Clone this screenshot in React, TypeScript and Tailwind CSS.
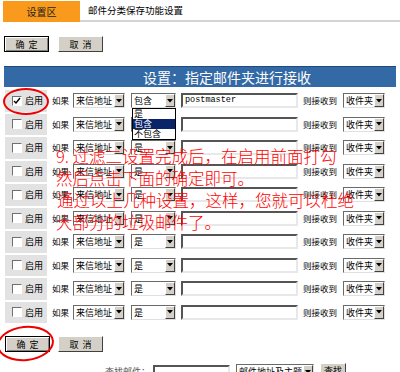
import React from 'react';

const rows = Array.from({ length: 10 }, (_, i) => i);

function Arrow() {
  return (
    <div className="flex h-full w-[10px] shrink-0 items-center justify-center border border-t-white border-l-white border-r-[#404040] border-b-[#404040] bg-[#d4d0c8]">
      <svg width="6" height="4" viewBox="0 0 6 4">
        <path d="M0 0h6L3 3.5z" fill="#000" />
      </svg>
    </div>
  );
}

function Select({ value, width }: { value: string; width: string }) {
  return (
    <div className={`flex h-[15px] ${width} shrink-0 items-stretch border border-t-[#6a6a6a] border-l-[#6a6a6a] border-r-[#e0e0e0] border-b-[#e0e0e0] bg-white`}>
      <div className="flex flex-1 items-center overflow-hidden pl-[2px] leading-none whitespace-nowrap">{value}</div>
      <Arrow />
    </div>
  );
}

function Checkbox({ checked }: { checked: boolean }) {
  return (
    <div className="flex h-[10px] w-[10px] shrink-0 items-center justify-center border border-t-[#707070] border-l-[#707070] border-r-white border-b-white bg-white">
      {checked && (
        <svg width="8" height="8" viewBox="0 0 8 8">
          <path d="M1 4l2 2 4-5" stroke="#000" strokeWidth="1.4" fill="none" />
        </svg>
      )}
    </div>
  );
}

function Btn({ label, primary }: { label: string; primary?: boolean }) {
  return (
    <button
      className={`flex h-[16px] w-[45px] items-center justify-center bg-[#d4d0c8] text-[9px] leading-none tracking-[4px] text-black ${
        primary
          ? 'border border-black shadow-[inset_1px_1px_0_#fff,inset_-1px_-1px_0_#808080]'
          : 'border border-t-white border-l-white border-r-[#404040] border-b-[#404040]'
      }`}
    >
      <span className="pl-[4px]">{label}</span>
    </button>
  );
}

export default function App() {
  return (
    <div className="relative h-[372px] w-[400px] overflow-hidden bg-white font-['Noto_Sans_CJK_SC',sans-serif] text-[9px] text-black">
      {/* tabs */}
      <div className="flex h-[22px] items-stretch pt-[1px] pl-[3px]">
        <div className="flex w-[77px] items-center justify-center bg-[#f99a1c] text-[10px] text-[#222]">设置区</div>
        <div className="flex flex-1 items-center border-b-2 border-[#d4d4d4] pl-[8px] text-[9.5px]">邮件分类保存功能设置</div>
      </div>

      {/* top buttons */}
      <div className="mt-[14px] flex gap-[9px] pl-[4px]">
        <Btn label="确定" primary />
        <Btn label="取消" />
      </div>

      {/* header */}
      <div className="mx-[4px] mt-[14px] flex h-[21px] items-center border-t border-[#1f4a80] bg-[#336aa6] pl-[139px] text-[14px] leading-none text-white">
        设置：指定邮件夹进行接收
      </div>

      {/* rows */}
      <div className="mt-[3px] flex flex-col gap-[2px] pl-[5px]">
        {rows.map((i) => (
          <div key={i} className="flex h-[21.5px] items-center">
            <div className="flex h-full w-[42px] items-center gap-[3px] bg-[#e2e2e2] pl-[7px]">
              <Checkbox checked={i === 0} />
              <span className="whitespace-nowrap">启用</span>
            </div>
            <span className="ml-[5px] w-[16px] shrink-0 text-[8.5px] whitespace-nowrap">如果</span>
            <div className="ml-[5px]">
              <Select value="来信地址" width="w-[52px]" />
            </div>
            <div className="ml-[6px]">
              <Select value={i === 0 ? '包含' : '是'} width="w-[45px]" />
            </div>
            <div className="ml-[5px] flex h-[15px] w-[117px] shrink-0 items-center border-2 border-t-[#555] border-l-[#555] border-r-[#e8e8e8] border-b-[#e8e8e8] bg-white pl-[2px] font-['Liberation_Mono',monospace] text-[8.5px]">
              {i === 0 ? 'postmaster' : ''}
            </div>
            <span className="ml-[5px] w-[35px] shrink-0 text-[8.5px] whitespace-nowrap">则接收到</span>
            <div className="ml-[5px]">
              <Select value="收件夹" width="w-[42px]" />
            </div>
          </div>
        ))}
      </div>

      {/* bottom buttons */}
      <div className="mt-[13px] flex gap-[8px] pl-[5px]">
        <Btn label="确定" primary />
        <Btn label="取消" />
      </div>

      {/* search row, cut off by the window */}
      <div className="mt-[13px] flex items-start pl-[105px]">
        <span className="w-[44px] text-[9px] whitespace-nowrap text-[#555]">查找邮件：</span>
        <div className="ml-[4px] h-[15px] w-[77px] border-2 border-t-[#555] border-l-[#555] border-r-[#e8e8e8] border-b-[#e8e8e8] bg-white" />
        <div className="ml-[6px] -mt-[1px]">
          <Select value="邮件地址及主题" width="w-[78px]" />
        </div>
        <div className="ml-[6px] -mt-[2px]">
          <button className="flex h-[16px] w-[26px] items-center justify-center border border-t-white border-l-white border-r-[#404040] border-b-[#404040] bg-[#d4d0c8] text-[9px]">查找</button>
        </div>
      </div>

      {/* open dropdown list */}
      <div className="absolute left-[132px] top-[108px] w-[44px] border border-black bg-white text-[9px] leading-[10px]">
        <div className="pl-[1px]">是</div>
        <div className="bg-[#0a246a] pl-[1px] text-white">包含</div>
        <div className="pl-[1px]">不包含</div>
      </div>

      {/* red annotations */}
      <div className="absolute left-[56px] top-[145px] font-['Noto_Sans_CJK_SC',sans-serif] text-[16.5px] leading-[22px] font-light whitespace-nowrap text-[#f00]">
        <div>9. 过滤二设置完成后，在启用前面打勾</div>
        <div>然后点击下面的确定即可。</div>
        <div className="pl-[1px]">通过以上几种设置，这样，您就可以杜绝</div>
        <div>大部分的垃圾邮件了。</div>
      </div>
      <div className="absolute left-[3px] top-[88px] h-[27px] w-[46px] rounded-[50%] border-2 border-[#e00]" />
      <div className="absolute left-[-3px] top-[326px] h-[35px] w-[57px] -rotate-6 rounded-[50%] border-2 border-[#e00]" />
    </div>
  );
}
